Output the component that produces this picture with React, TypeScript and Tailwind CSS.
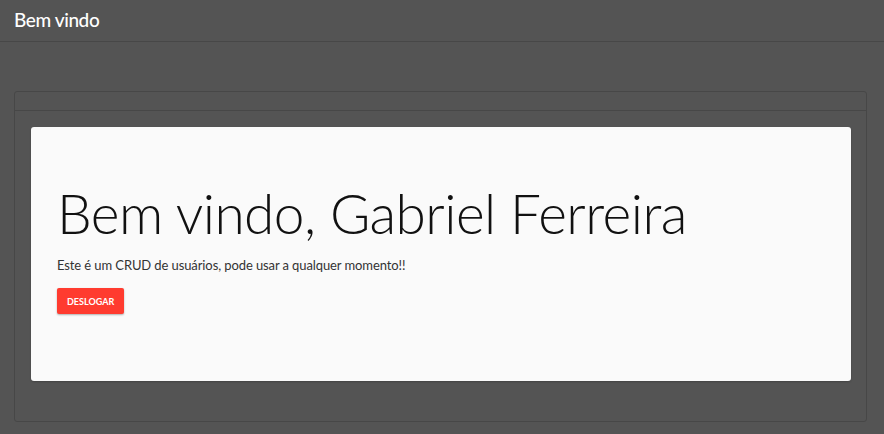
export default function App() {
  return (
    <div className="min-h-[434px] bg-[#545454]" style={{ fontFamily: "Lato, 'Open Sans', sans-serif" }}>
      <header className="h-[42px] border-b border-[#474747] flex items-center px-[14px]">
        <h1 className="text-[19px] text-white tracking-[-0.4px] font-medium">Bem vindo</h1>
      </header>
      <div className="pl-[14px] pr-[17px] pt-[49px] pb-[12px]">
        <div className="border border-[#474747] rounded-[3px]">
          <div className="h-[19px] border-b border-[#474747]"></div>
          <div className="pl-[16px] pr-[15px] pt-[16px] pb-[40px]">
            <div className="bg-[#fafafa] rounded-[3px] h-[254px] flex flex-col pt-[59px] px-[26px] shadow-[0_1px_2px_rgba(0,0,0,0.2)]">
              <h2 className="text-[55px] font-light text-[#111] leading-none tracking-[-0.55px]">Bem vindo, Gabriel Ferreira</h2>
              <p className="mt-[15px] text-[13px] text-[#333] tracking-[-0.1px]">Este é um CRUD de usuários, pode usar a qualquer momento!!</p>
              <div className="mt-[11px]">
                <button className="h-[26px] px-[10px] rounded-[2px] bg-[#ff3b2f] text-white text-[9px] font-bold shadow-[0_1px_2px_rgba(0,0,0,0.3)]">DESLOGAR</button>
              </div>
            </div>
          </div>
        </div>
      </div>
    </div>
  );
}
